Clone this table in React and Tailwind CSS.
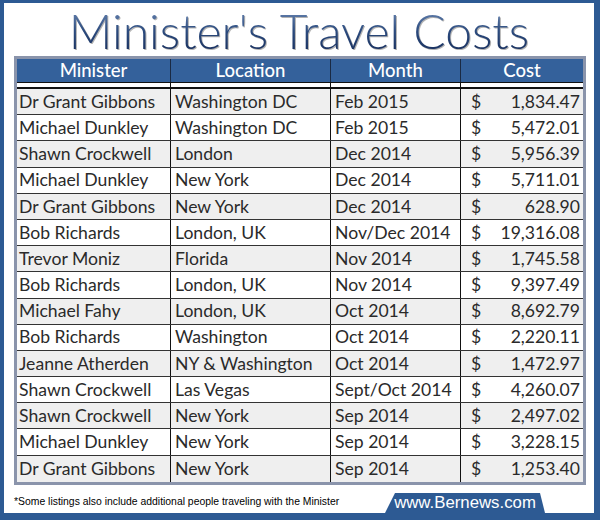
import React from "react";

const rows = [
  ["Dr Grant Gibbons", "Washington DC", "Feb 2015", "1,834.47"],
  ["Michael Dunkley", "Washington DC", "Feb 2015", "5,472.01"],
  ["Shawn Crockwell", "London", "Dec 2014", "5,956.39"],
  ["Michael Dunkley", "New York", "Dec 2014", "5,711.01"],
  ["Dr Grant Gibbons", "New York", "Dec 2014", "628.90"],
  ["Bob Richards", "London, UK", "Nov/Dec 2014", "19,316.08"],
  ["Trevor Moniz", "Florida", "Nov 2014", "1,745.58"],
  ["Bob Richards", "London, UK", "Nov 2014", "9,397.49"],
  ["Michael Fahy", "London, UK", "Oct 2014", "8,692.79"],
  ["Bob Richards", "Washington", "Oct 2014", "2,220.11"],
  ["Jeanne Atherden", "NY & Washington", "Oct 2014", "1,472.97"],
  ["Shawn Crockwell", "Las Vegas", "Sept/Oct 2014", "4,260.07"],
  ["Shawn Crockwell", "New York", "Sep 2014", "2,497.02"],
  ["Michael Dunkley", "New York", "Sep 2014", "3,228.15"],
  ["Dr Grant Gibbons", "New York", "Sep 2014", "1,253.40"],
];

export default function App() {
  return (
    <div className="w-[600px] h-[520px] bg-[#2d5a93] pt-[3px] pr-[6px] pb-[7px] pl-[4px]">
      <div className="w-full h-full bg-white flex flex-col">
        <div className="h-[53px] flex items-center justify-center">
          <h1
            className="text-[48px] font-light leading-none mt-[3px] bg-gradient-to-b from-[#6f8bb6] via-[#2c4b7e] to-[#172d5a] bg-clip-text text-transparent [filter:drop-shadow(1px_1px_0.5px_rgba(0,0,0,0.3))]"
            style={{ fontFamily: "Lato, 'Open Sans', sans-serif" }}
          >
            Minister's Travel Costs
          </h1>
        </div>
        <div
          className="ml-[10px] mr-[8px] border-[3px] border-[#8a94ab] bg-white"
          style={{ fontFamily: "Lato, 'Open Sans', sans-serif" }}
        >
          <div className="grid grid-cols-[154px_160px_130px_1fr] h-[23px] bg-[#34619b] text-white text-[18.5px] font-medium leading-none">
            <div className="flex items-center justify-center border-r border-[#1a2a44]">Minister</div>
            <div className="flex items-center justify-center border-r border-[#1a2a44]">Location</div>
            <div className="flex items-center justify-center border-r border-[#1a2a44]">Month</div>
            <div className="flex items-center justify-center">Cost</div>
          </div>
          <div className="h-[1px] bg-[#111]" />
          <div className="h-[4px] bg-white grid grid-cols-[154px_160px_130px_1fr]">
            <div className="border-r border-[#111]" />
            <div className="border-r border-[#111]" />
            <div className="border-r border-[#111]" />
            <div />
          </div>
          <div className="h-[2px] bg-[#111]" />
          {rows.map((r, i) => (
            <div
              key={i}
              className={`grid grid-cols-[154px_160px_130px_1fr] h-[26.2px] text-[17.6px] leading-none text-[#2a2a2a] ${
                i % 2 === 0 ? "bg-[#efefef]" : "bg-white"
              } ${i < rows.length - 1 ? "border-b border-[#333]" : ""}`}
            >
              <div className="flex items-center pl-[2px] border-r border-[#111] whitespace-nowrap">{r[0]}</div>
              <div className="flex items-center pl-[4px] border-r border-[#111] whitespace-nowrap">{r[1]}</div>
              <div className="flex items-center pl-[4px] border-r border-[#111] whitespace-nowrap">{r[2]}</div>
              <div className="flex items-center justify-between pl-[10px] pr-[3px]">
                <span>$</span>
                <span>{r[3]}</span>
              </div>
            </div>
          ))}
        </div>
        <div className="flex-1 flex items-end justify-between pl-[10px]">
          <div
            className="text-[10.4px] text-black self-center mt-[6px]"
            style={{ fontFamily: "'Liberation Sans', Arial, sans-serif" }}
          >
            *Some listings also include additional people traveling with the Minister
          </div>
          <div
            className="mr-[49px] w-[160px] h-[20px] bg-[#2d5a93] text-white text-[16.8px] leading-none flex items-center justify-center pt-[1px] [clip-path:polygon(10px_0,155px_0,160px_100%,0_100%)]"
            style={{ fontFamily: "'Liberation Sans', Arial, sans-serif" }}
          >
            www.Bernews.com
          </div>
        </div>
      </div>
    </div>
  );
}
